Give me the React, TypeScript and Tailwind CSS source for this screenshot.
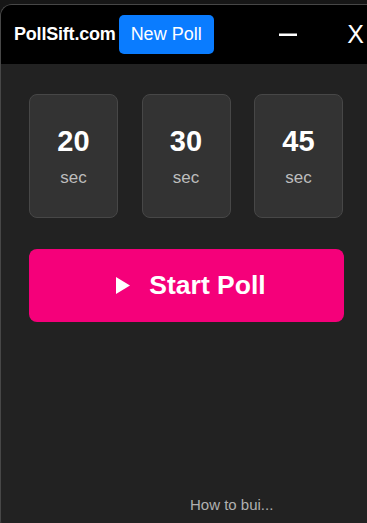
const durations = [20, 30, 45];

export default function App() {
  return (
    <div className="h-[523px] w-[367px] overflow-hidden bg-[#161616] pt-[4px] font-['Liberation_Sans',Arial,sans-serif]">
      <div className="flex h-[528px] flex-col overflow-hidden rounded-tl-[12px] rounded-bl-[12px] border-l border-t border-[#474747] bg-[#222222]">
        {/* header */}
        <div className="flex h-[59px] shrink-0 items-center bg-black pl-[13px]">
          <span className="text-[18px] font-bold tracking-[-0.2px] text-white">PollSift.com</span>
          <button className="ml-[3px] h-[39px] rounded-[5px] bg-[#0a7cff] px-[12px] text-[18px] text-white">
            New Poll
          </button>
          <div className="ml-auto flex items-center">
            <svg width="18" height="4" viewBox="0 0 18 4" className="mr-[50px]">
              <rect x="0" y="0.5" width="18" height="2.5" fill="white" />
            </svg>
            <span className="mr-[3px] text-[25px] leading-none text-white">X</span>
          </div>
        </div>

        {/* body */}
        <div className="flex flex-1 flex-col pl-[28px] pt-[30px]">
          <div className="flex gap-[23.5px]">
            {durations.map((d) => (
              <button
                key={d}
                className="flex h-[124px] w-[89px] flex-col items-center justify-center rounded-[8px] border border-[#474747] bg-[#333333]"
              >
                <span className="text-[29px] font-bold leading-none text-white">{d}</span>
                <span className="mt-[13px] text-[17px] leading-none text-[#bdbdbd]">sec</span>
              </button>
            ))}
          </div>

          <button className="mt-[31px] flex h-[73px] w-[315px] items-center justify-center rounded-[8px] bg-[#f5007a] pl-[9px] text-white">
            <svg width="14" height="17" viewBox="0 0 14 17" className="mr-[19px]">
              <path d="M0 0 L14 8.5 L0 17 Z" fill="white" />
            </svg>
            <span className="text-[26.5px] font-bold">Start Poll</span>
          </button>

          <div className="mt-auto pb-[16px] pl-[161px] text-[15px] text-[#b0b0b0]">How to bui...</div>
        </div>
      </div>
    </div>
  );
}
